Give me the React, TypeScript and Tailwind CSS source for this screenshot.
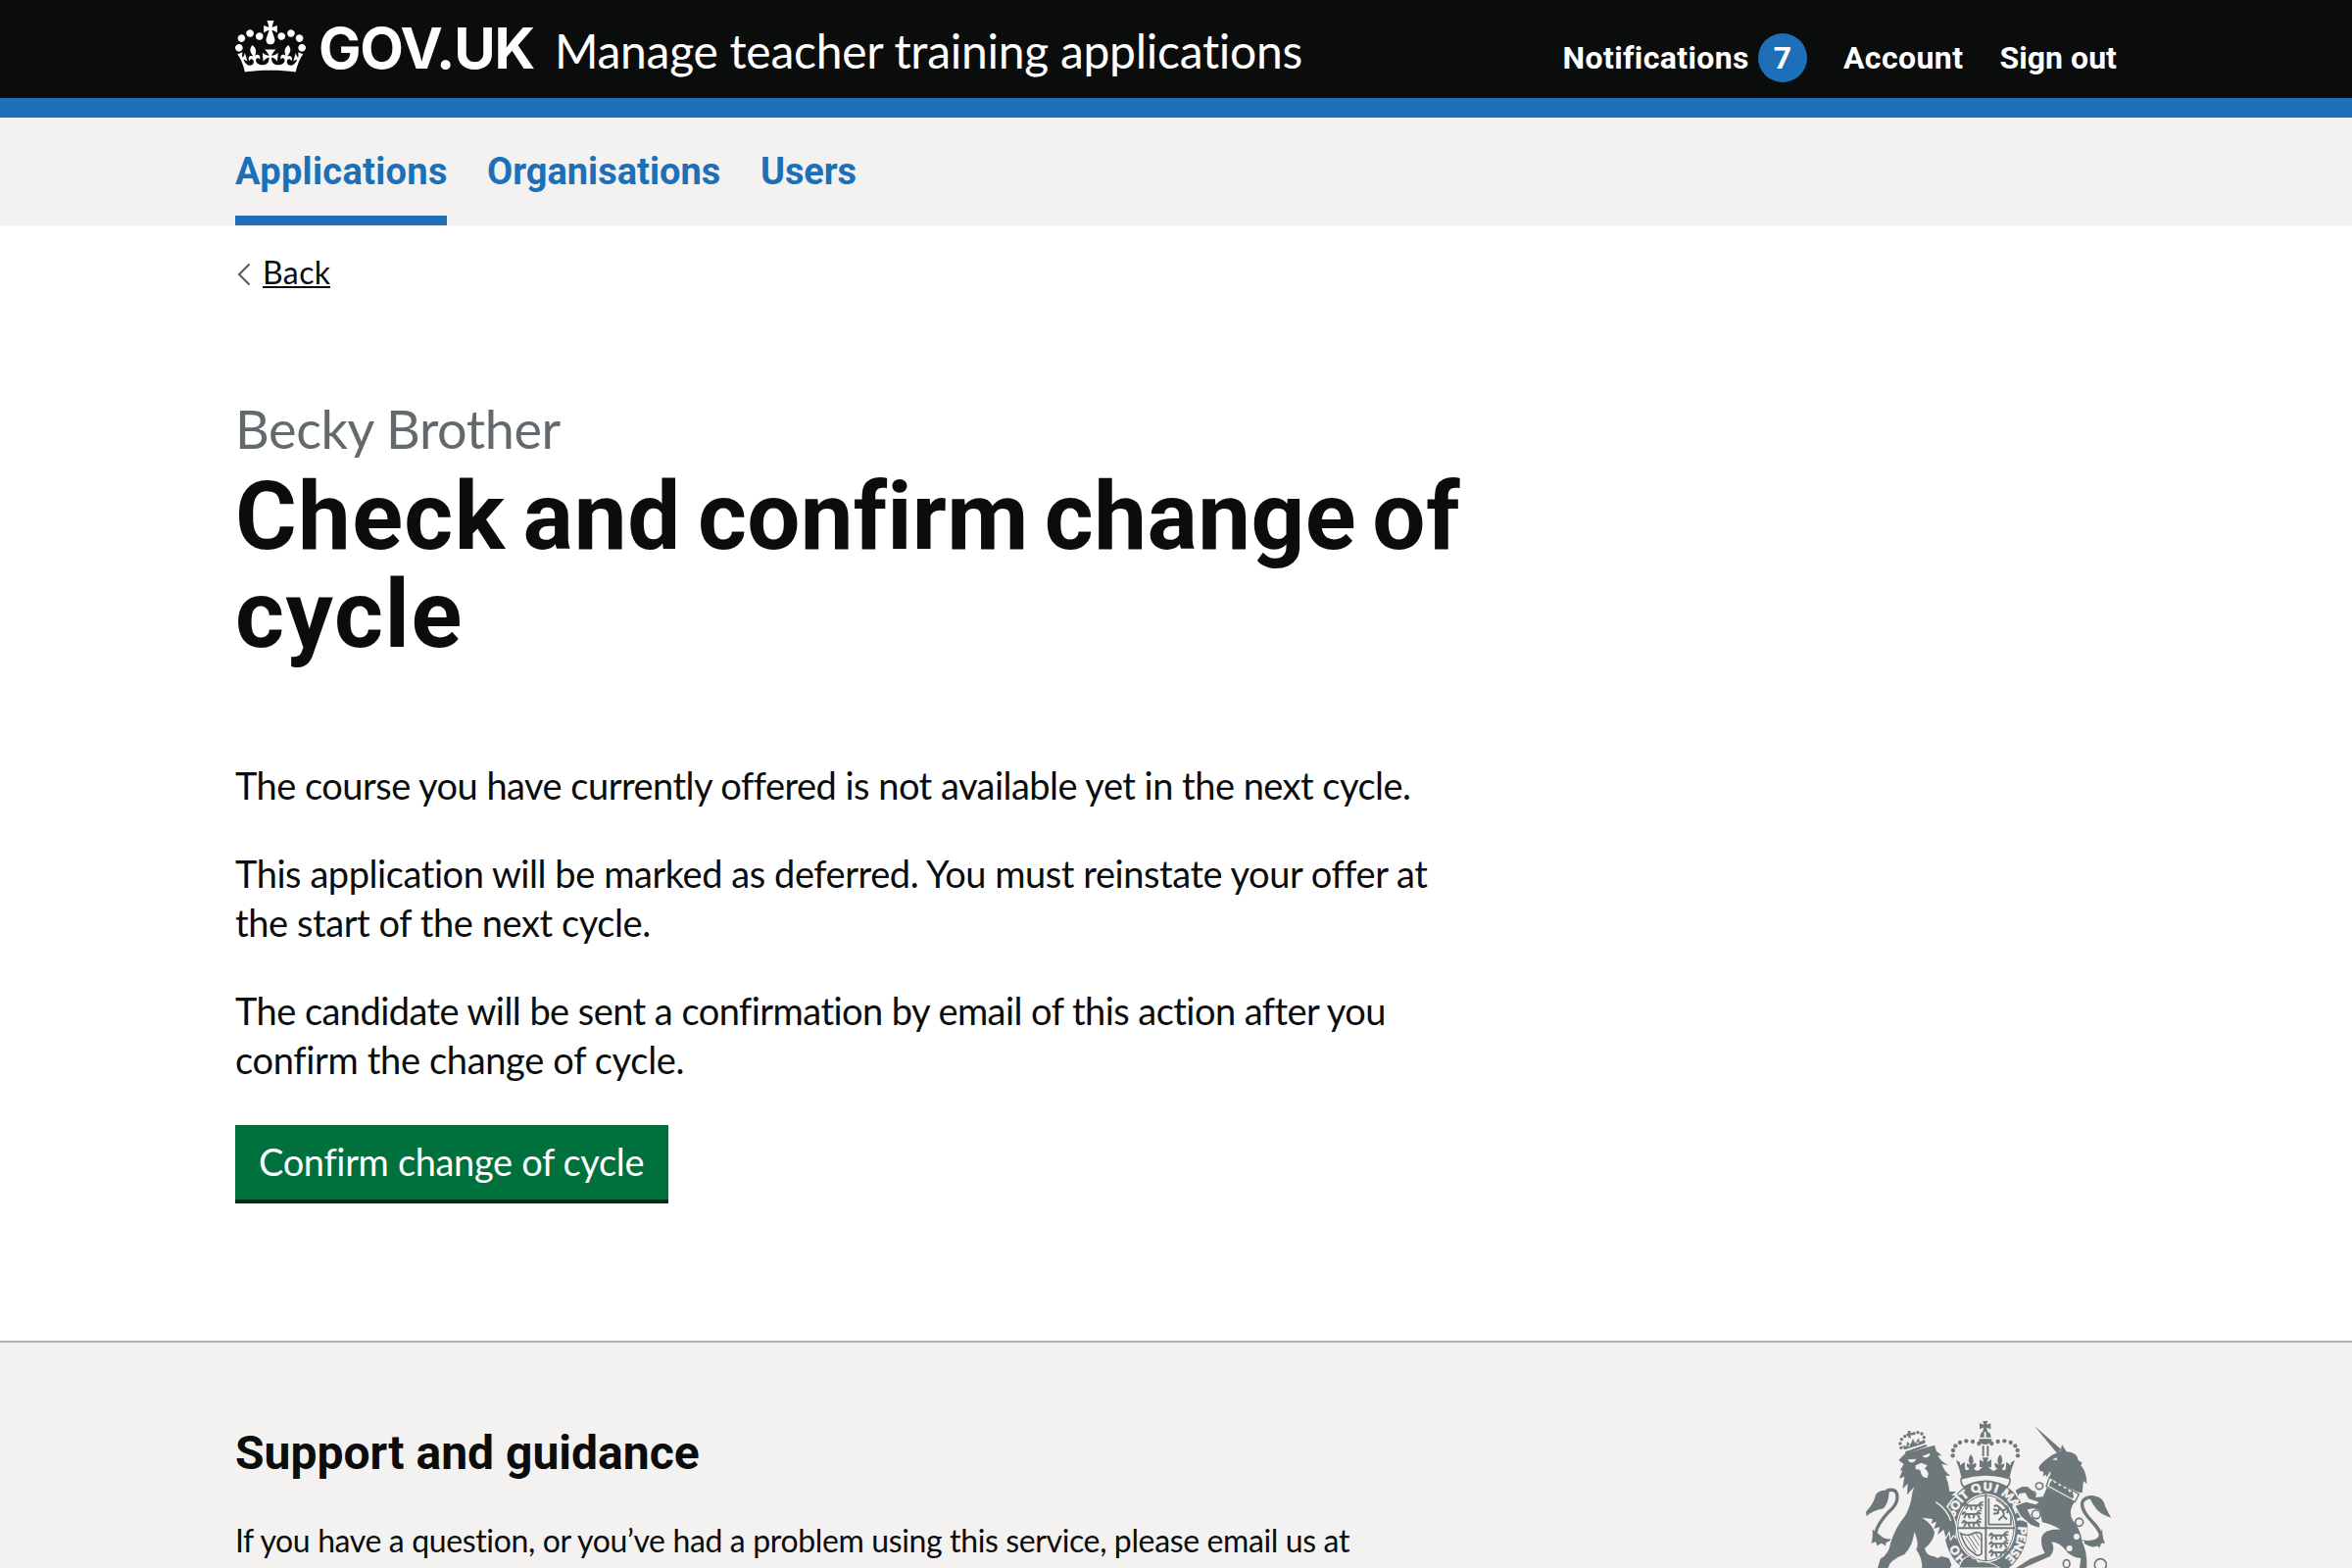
import React from 'react';

function Crown() {
  return (
    <svg viewBox="0 0 132 97" className="h-[53px] w-[72px] shrink-0" fill="currentColor" aria-hidden="true">
      <path
        fillRule="evenodd"
        d="M25 30.2c3.5 1.5 7.7-.2 9.1-3.7 1.5-3.6-.2-7.8-3.9-9.2-3.6-1.4-7.6.3-9.1 3.9-1.4 3.5.3 7.5 3.9 9zM9 39.5c3.6 1.5 7.8-.2 9.2-3.7 1.5-3.6-.2-7.8-3.9-9.1-3.6-1.5-7.6.2-9.1 3.8-1.4 3.5.3 7.5 3.8 9zM4.4 57.2c3.5 1.5 7.7-.2 9.1-3.8 1.5-3.6-.2-7.7-3.9-9.1-3.5-1.5-7.6.3-9.1 3.8-1.4 3.5.3 7.6 3.9 9.1zm38.3-21.4c3.5 1.5 7.7-.2 9.1-3.8 1.5-3.6-.2-7.7-3.9-9.1-3.6-1.5-7.6.3-9.1 3.8-1.3 3.6.4 7.7 3.9 9.1zm64.4-5.6c-3.6 1.5-7.8-.2-9.1-3.7-1.5-3.6.2-7.8 3.8-9.2 3.6-1.4 7.7.3 9.2 3.9 1.3 3.5-.4 7.5-3.9 9zm15.9 9.3c-3.6 1.5-7.7-.2-9.1-3.7-1.5-3.6.2-7.8 3.7-9.1 3.6-1.5 7.7.2 9.2 3.8 1.5 3.5-.3 7.5-3.8 9zm4.7 17.7c-3.6 1.5-7.8-.2-9.2-3.8-1.5-3.6.2-7.7 3.9-9.1 3.6-1.5 7.7.3 9.2 3.8 1.3 3.5-.4 7.6-3.9 9.1zM89.3 35.8c-3.6 1.5-7.8-.2-9.2-3.8-1.4-3.6.2-7.7 3.9-9.1 3.6-1.5 7.7.3 9.2 3.8 1.4 3.6-.3 7.7-3.9 9.1zM69.7 17.7l8.9 4.7V9.3l-8.9 2.8c-.2-.3-.5-.6-.9-.9L72.4 0H59.6l3.5 11.2c-.3.3-.6.5-.9.9l-8.8-2.8v13.1l8.8-4.7c.3.3.6.7.9.9l-5 15.4v.1c-.2.8-.4 1.6-.4 2.4 0 4.1 3.1 7.5 7 8.1h.2c.3 0 .7.1 1 .1.4 0 .7 0 1-.1h.2c4-.6 7.1-4.1 7.1-8.1 0-.8-.1-1.7-.4-2.4V34l-5.1-15.4c.4-.2.7-.6 1-.9zM66 92.8c16.9 0 32.8 1.1 47.1 3.2 4-16.9 8.9-26.7 14-33.5l-9.6-3.4c1 4.9 1.1 7.2 0 10.2-1.5-1.4-3-4.3-4.2-8.7L108.6 76c2.8-2 5-3.2 7.5-3.3-4.4 9.4-10 11.9-13.6 11.2-4.3-.8-6.3-4.6-5.6-7.9 1-4.7 5.7-5.9 8-.5 4.3-8.7-3-11.4-7.6-8.8 7.1-7.2 7.9-13.5 2.1-21.1-8 6.1-8.1 12.3-4.5 20.8-4.7-5.4-12.1-2.5-9.5 6.2 3.4-5.2 7.9-2 7.2 3.1-.6 4.3-6.4 7.8-13.5 7.2-10.3-.9-10.9-8-11.2-13.8 2.5-.5 7.1 1.8 11 7.3L80.2 60c-4.1 4.4-8 5.3-12.3 5.4 1.4-4.4 8-11.6 8-11.6H55.5s6.4 7.2 7.9 11.6c-4.2-.1-8-1-12.3-5.4l1.4 16.4c3.9-5.5 8.5-7.7 10.9-7.3-.3 5.8-.9 12.8-11.1 13.8-7.2.6-12.9-2.9-13.5-7.2-.7-5 3.8-8.3 7.1-3.1 2.7-8.7-4.6-11.6-9.4-6.2 3.7-8.5 3.6-14.7-4.6-20.8-5.8 7.6-5 13.9 2.2 21.1-4.7-2.6-11.9.1-7.7 8.8 2.3-5.5 7.1-4.2 8.1.5.7 3.3-1.3 7.1-5.7 7.9-3.5.7-9-1.8-13.5-11.2 2.5.1 4.7 1.3 7.5 3.3l-4.7-15.4c-1.2 4.4-2.7 7.2-4.3 8.7-1.1-3-.9-5.3 0-10.2l-9.5 3.4c5 6.9 9.9 16.7 14 33.5 14.8-2.1 30.8-3.2 47.7-3.2z"
      />
    </svg>
  );
}

const INK = '#6e787a';
const PAPER = '#f3f2f1';

const crownPearls = [
  [388, 99], [369, 93], [349, 91], [330, 96], [316, 106], [309, 120], [308, 136],
];
const lionPearls = [
  [150, 112], [147, 99], [151, 86], [161, 77], [189, 68], [201, 65], [213, 69], [220, 80], [219, 93],
];

// One of the three walking lions that fill an English quarter.
function PassantLion({ x, y }: { x: number; y: number }) {
  return (
    <g transform={`translate(${x} ${y})`} fill="none" stroke={INK} strokeWidth="6">
      <path d="M2 10Q8 2 16 8L46 8Q54 2 60 8M14 10L8 20M22 10L26 22M40 10L36 21M50 10L56 20" />
      <path d="M4 4L12 0M46 8Q52 -6 62 -2" strokeWidth="4" />
    </g>
  );
}

function Crest() {
  return (
    <svg viewBox="0 0 840 480" className="h-[160px] w-[280px] shrink-0" fill={INK} aria-hidden="true">
      {/* garter and shield */}
      <ellipse cx="409" cy="358" rx="128" ry="146" />
      <ellipse cx="409" cy="358" rx="91" ry="105" fill={PAPER} />
      <ellipse cx="409" cy="358" rx="86" ry="100" fill="none" stroke={INK} strokeWidth="3" />
      <path d="M406 254h6v206h-6zM320 355h178v6H320z" />
      <PassantLion x={340} y={281} />
      <PassantLion x={334} y={307} />
      <PassantLion x={334} y={333} />
      <PassantLion x={417} y={372} />
      <PassantLion x={417} y={398} />
      <PassantLion x={417} y={424} />
      <path d="M418 266V347H486V318Q470 285 440 270" fill="none" stroke={INK} strokeWidth="5" />
      <path
        d="M434 292Q442 284 450 294L460 304L472 300M450 296L446 312L432 314M460 306Q470 316 458 324L448 334M462 320L474 332M432 300L444 304M470 290Q482 296 474 312"
        fill="none"
        stroke={INK}
        strokeWidth="6"
      />
      <path d="M332 374Q352 384 366 376Q384 366 396 376V436Q384 448 372 434Q346 420 332 374Z" fill="none" stroke={INK} strokeWidth="5" />
      <path d="M346 384L378 432M356 382L384 424M367 378L389 412M379 374L392 394" stroke={INK} strokeWidth="3" />
      <path id="garter" d="M409 472A99 114 0 0 1 310 358A99 114 0 0 1 409 244A99 114 0 0 1 508 358A99 114 0 0 1 409 472" fill="none" />
      <g fill={PAPER} stroke={PAPER} strokeWidth="1.5" className="font-['Lato'] text-[36px] font-extrabold">
        <text><textPath href="#garter" startOffset="60" textLength="58">HO</textPath></text>
        <text><textPath href="#garter" startOffset="200" textLength="82">SOIT</textPath></text>
        <text><textPath href="#garter" startOffset="293" textLength="76">QUI</textPath></text>
        <text><textPath href="#garter" startOffset="381" textLength="76">MAL</textPath></text>
        <text><textPath href="#garter" startOffset="463" textLength="24">Y</textPath></text>
        <text><textPath href="#garter" startOffset="497" textLength="108">PENSE</textPath></text>
      </g>

      {/* royal crown */}
      <path d="M334 206Q408 184 482 206Q486 220 474 232Q408 196 342 232Q330 220 334 206Z" fill={PAPER} stroke={INK} strokeWidth="5" />
      <path d="M400 30h15l-4 11 13-4v18l-13-5 4 14h-16l4-14-13 5V37l13 4z" />
      <path d="M391 80Q392 62 404 62V80ZM410 62Q424 62 425 80H410ZM388 85H427V91Q420 102 408 102Q394 102 388 91Z" />
      <path d="M398 106h6v32h-6zM412 106h6v32h-6z" />
      {crownPearls.map(([x, y]) => (
        <g key={`${x}-${y}`}>
          <circle cx={x} cy={y} r="6.5" />
          <circle cx={815 - x} cy={y} r="6.5" />
        </g>
      ))}
      <path d="M318 150L330 157L330 166L344 155L346 178Q352 184 358 176Q346 168 352 160L362 164Q350 150 363 132Q378 150 366 164L378 158Q384 168 372 176Q380 184 386 182L400 170L390 172V148L403 156L398 142H418L412 156L426 148V172L416 170L430 182Q436 184 444 176Q432 168 438 158L450 164Q438 150 453 132Q466 150 454 164L464 160Q470 168 458 176Q464 184 470 178L472 155L486 166L486 157L498 150Q486 178 481 206Q408 184 335 206Q330 178 318 150Z" />

      {/* lion */}
      <path d="M113 245Q86 236 72 256Q66 284 42 308L44 322Q62 304 96 298Q112 280 113 245Z" />
      <path d="M104 244Q138 232 138 264Q138 286 112 308Q78 344 72 372Q70 392 92 398" fill="none" stroke={INK} strokeWidth="10" />
      <path d="M62 362Q64 388 58 404L72 400L76 412L90 404L102 412L104 402L132 390Q100 396 84 378Z" />
      <path
        stroke={PAPER}
        strokeWidth="7"
        style={{ paintOrder: 'stroke' }}
        d="M142 150L162 130L252 104L258 122L274 136L262 136Q272 156 294 164L274 162Q282 184 300 198L286 197Q296 222 298 246L318 246L304 258L316 258Q300 272 288 292Q312 316 318 356L316 384L310 378L302 390L298 366L286 386L280 362L262 378L268 354L250 360L258 338L242 344L246 330L214 326Q244 344 252 370Q250 398 222 420Q228 444 250 444L262 450L272 444L296 450L304 470L300 480H214Q214 448 196 424Q206 404 190 370Q186 412 160 438Q114 456 110 480H78L86 452Q112 440 118 402Q132 356 162 320Q180 290 184 250L190 232L168 256L170 222L154 238L160 200L144 206L154 180L146 182L158 162Z"
      />
      <path d="M256 278Q290 300 302 336" fill="none" stroke={PAPER} strokeWidth="4" />
      <path d="M170 148L196 146Q190 160 176 156ZM214 138L238 128Q238 142 222 142Z" fill={PAPER} />
      <path d="M194 166L212 158L230 166L222 176Q238 186 230 204Q216 206 210 188Q210 176 194 178Z" fill={PAPER} />
      {lionPearls.map(([x, y]) => (
        <circle key={`${x}-${y}`} cx={x} cy={y} r="5" />
      ))}
      <path d="M162 124L226 102L230 107L164 131Z" />
      <path d="M160 118L154 104L166 108L168 92L178 103L186 84L192 98L204 82L206 94L220 90L222 98Z" />
      <path d="M170 60L178 60L178 66L186 66L184 75L178 73L180 82L172 82L172 75L166 77L166 68L171 68Z" />
      <circle cx="174" cy="106" r="3" fill={PAPER} />
      <circle cx="200" cy="97" r="3" fill={PAPER} />

      {/* unicorn */}
      <path d="M557 44L640 117L628 130Z" />
      <path d="M571 172Q574 160 612 134L638 122L642 102L656 124Q690 126 692 150L704 158L700 166Q718 186 718 222L708 214L704 250L692 248L602 204Q610 190 606 184L596 202L592 194L584 200L586 186L574 182Z" />
      <path d="M612 148L626 142L628 150Z" fill={PAPER} />
      <path
        stroke={PAPER}
        strokeWidth="7"
        style={{ paintOrder: 'stroke' }}
        d="M596 234L682 276Q660 306 674 332Q700 362 704 400Q720 432 718 480H696L700 450Q668 448 652 424Q634 402 610 400Q624 424 606 444L560 464L520 482H498L544 452L590 434Q576 412 580 386Q588 360 638 362Q606 344 582 340L574 304Q552 292 536 302L548 324L574 344L572 356L548 348L516 320L500 290L532 278L562 286L572 278L540 268L530 250L512 252L508 260L500 242L520 231L538 232L556 248L562 264L584 262Z"
      />
      <path d="M604 202L694 254L682 278L594 230Z" fill={PAPER} stroke={INK} strokeWidth="4" />
      <path d="M604 222L612 210L620 220L630 216L634 230L644 224L650 238L660 234L664 248L674 244L678 262L674 268L602 228Z" />
      <path d="M712 400Q742 420 758 400Q770 376 738 342Q700 304 704 280Q712 260 740 264" fill="none" stroke={INK} strokeWidth="10" />
      <path d="M728 259Q768 258 774 290L792 326Q764 318 748 300Q736 286 728 268Z" />
      <path d="M766 360Q764 386 774 404L762 404L758 418L744 408L732 414L724 406L700 394Q738 400 752 386Z" />
      <g fill="none" stroke={INK} strokeWidth="5">
        <ellipse cx="573" cy="229" rx="11" ry="10" />
        <circle cx="553" cy="254" r="8" />
        <circle cx="563" cy="316" r="13" fill={PAPER} />
        <circle cx="695" cy="340" r="12" fill={PAPER} />
        <ellipse cx="656" cy="467" rx="10" ry="12" />
        <circle cx="760" cy="470" r="18" />
      </g>
      <circle cx="687" cy="384" r="9" fill={PAPER} />
      <circle cx="665" cy="420" r="9" fill={PAPER} />

      {/* foot of the garter */}
      <path d="M326 480Q336 448 360 442L370 452L380 450L384 462Q420 456 452 480Z" stroke={PAPER} strokeWidth="3" />
    </svg>
  );
}

export default function App() {
  return (
    <div className="h-[1600px] w-[2400px] overflow-hidden bg-white font-['Lato',sans-serif] text-[#0b0c0c]">
      <header className="h-[120px] border-b-20 border-[#1d70b8] bg-[#0b0c0c] text-white">
        <div className="mx-auto flex w-[1920px] items-start">
          <div className="pt-[21px]"><Crown /></div>
          <span className="ml-[13px] pt-[13px] font-['Inter'] text-[58px] leading-[72px] font-bold tracking-[-1.2px]">GOV.UK</span>
          <span className="ml-[21px] pt-[22px] text-[48px] leading-[60px] tracking-[-0.28px]">Manage teacher training applications</span>
          <nav className="ml-auto flex pt-[34px] font-['Roboto'] text-[32px] leading-[50px] font-bold">
            <a className="tracking-[0.38px]">Notifications</a>
            <span className="ml-[9px] size-[50px] rounded-full bg-[#1d70b8] text-center">7</span>
            <a className="ml-[37px] tracking-[0.42px]">Account</a>
            <a className="ml-[37px] tracking-[0.05px]">Sign out</a>
          </nav>
        </div>
      </header>

      <div className="h-[110px] bg-[#f3f2f1]">
        <nav className="mx-auto flex h-full w-[1920px] gap-[41px] font-['Roboto'] text-[38px] leading-[50px] font-bold text-[#1d70b8]">
          <a className="w-[216px] border-b-10 border-[#1d70b8] pt-[30px] whitespace-nowrap tracking-[0.3px]">Applications</a>
          <a className="w-[238px] pt-[30px] whitespace-nowrap">Organisations</a>
          <a className="pt-[30px] tracking-[-0.14px]">Users</a>
        </nav>
      </div>

      <main className="mx-auto h-[1138px] w-[1920px]">
        <div className="flex items-start pt-[28px]">
          <svg viewBox="0 0 16 24" className="mt-[10px] h-[24px] w-[16px]" fill="none" stroke="#505a5f" strokeWidth="2">
            <path d="M14.5 1.5L4 12L14.5 22.5" />
          </svg>
          <a className="ml-[12px] h-[36px] border-b-2 border-[#0b0c0c] text-[32px] leading-[40px] tracking-[0.4px]">Back</a>
        </div>

        <div className="pt-[114px]">
          <p className="text-[54px] leading-[60px] tracking-[-0.42px] text-[#626a6e]">Becky Brother</p>
          <h1 className="mt-[9px] font-['Roboto'] text-[96px] leading-[100px] font-bold">
            <span className="block tracking-[0.6px] [word-spacing:-7.8px]">
              <span className="tracking-[1.3px]">Check </span>
              <span className="tracking-[0.8px]">and </span>
              <span className="tracking-[0.2px]">confirm </span>
              <span className="tracking-[0.4px]">change </span>
              of
            </span>
            <span className="block tracking-[1.58px]">cycle</span>
          </h1>
        </div>

        <div className="flex flex-col gap-[40px] pt-[99px] text-[38px] leading-[50px] whitespace-nowrap">
          <p className="tracking-[-0.52px]">The course you have currently offered is not available yet in the next cycle.</p>
          <p>
            <span className="block tracking-[-0.44px]">This application will be marked as deferred. You must reinstate your offer at</span>
            <span className="block tracking-[-0.42px]">the start of the next cycle.</span>
          </p>
          <p>
            <span className="block tracking-[-0.55px]">The candidate will be sent a confirmation by email of this action after you</span>
            <span className="block tracking-[-0.34px]">confirm the change of cycle.</span>
          </p>
        </div>

        <button className="mt-[42px] flex h-[80px] w-[442px] items-start border-b-4 border-[#002d18] bg-[#00703c] pt-[18px] pl-[24px] text-[38px] leading-[38px] tracking-[-0.35px] text-white">
          Confirm change of cycle
        </button>
      </main>

      <footer className="h-[232px] border-t-2 border-[#b1b4b6] bg-[#f3f2f1]">
        <div className="mx-auto flex w-[1920px] items-start justify-between whitespace-nowrap">
          <div className="pt-[83px]">
            <h2 className="font-['Roboto'] text-[48px] leading-[60px] font-bold">Support and guidance</h2>
            <p className="mt-[39px] text-[32px] leading-[40px] tracking-[-0.37px]">
              If you have a question, or you’ve had a problem using this service, please email us at
            </p>
          </div>
          <div className="mt-[70px] mr-[-10px] h-[160px]"><Crest /></div>
        </div>
      </footer>
    </div>
  );
}
